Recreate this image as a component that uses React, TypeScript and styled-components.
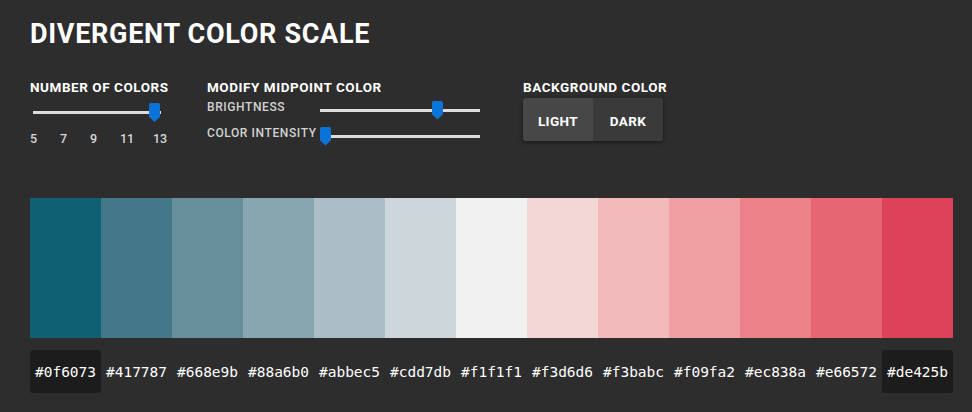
import React from "react";
import styled, { createGlobalStyle } from "styled-components";

const Global = createGlobalStyle`
  html, body { margin: 0; padding: 0; background: #2d2d2d; }
  body { font-family: "Roboto", "DejaVu Sans", sans-serif; color: #fff; }
`;

const colors = [
  "#0f6073", "#417787", "#668e9b", "#88a6b0", "#abbec5", "#cdd7db", "#f1f1f1",
  "#f3d6d6", "#f3babc", "#f09fa2", "#ec838a", "#e66572", "#de425b",
];

const Page = styled.div`
  width: 972px;
  height: 412px;
  box-sizing: border-box;
  padding: 19px 19px 0 30px;
  overflow: hidden;
`;

const Title = styled.h1`
  margin: 0;
  font-family: "Roboto", sans-serif;
  font-weight: 700;
  font-size: 27px;
  letter-spacing: 0.7px;
  line-height: 30px;
`;

const Controls = styled.div`
  display: flex;
  align-items: flex-start;
  margin-top: 30px;
  height: 119px;
`;

const Group = styled.div<{ $w: number }>`
  width: ${(p) => p.$w}px;
  display: flex;
  flex-direction: column;
`;

const GroupTitle = styled.div`
  font-weight: 700;
  font-size: 13.5px;
  letter-spacing: 0.55px;
  line-height: 16px;
  text-transform: uppercase;
  white-space: nowrap;
`;

const Track = styled.div<{ $w: number }>`
  position: relative;
  width: ${(p) => p.$w}px;
  height: 3px;
  background: #dcdcdc;
`;

const Thumb = styled.div`
  position: absolute;
  top: -8px;
  width: 11px;
  height: 19px;
  background: #0a74d8;
  border-radius: 2px 2px 0 0;
  clip-path: polygon(0 0, 100% 0, 100% 72%, 50% 100%, 0 72%);
`;

const Slider = ({ w, pos }: { w: number; pos: number }) => (
  <Track $w={w}>
    <Thumb style={{ left: pos }} />
  </Track>
);

const NumSlider = styled.div`
  margin-top: 16px;
  padding-left: 3px;
`;

const Ticks = styled.div`
  display: flex;
  margin-top: 18px;
  font-size: 12.5px;
  font-weight: 500;
  color: #d8d8d8;
  line-height: 14px;
`;

const Tick = styled.span<{ $w: number }>`
  width: ${(p) => p.$w}px;
`;

const SubRow = styled.div<{ $mt: number }>`
  display: flex;
  align-items: center;
  margin-top: ${(p) => p.$mt}px;
  height: 14px;
`;

const SubLabel = styled.div`
  width: 113px;
  font-size: 12px;
  font-weight: 500;
  color: #d2d2d2;
  letter-spacing: 0.6px;
  text-transform: uppercase;
  white-space: nowrap;
`;

const SliderSlot = styled.div`
  padding-top: 6px;
`;

const ButtonGroup = styled.div`
  display: flex;
  margin-top: 3px;
  border-radius: 3px;
  overflow: hidden;
  box-shadow: 0 1px 4px rgba(0, 0, 0, 0.5);
  width: 140px;
`;

const ToggleButton = styled.div<{ $active?: boolean }>`
  width: 70px;
  height: 43px;
  display: flex;
  align-items: center;
  justify-content: center;
  padding-top: 3px;
  box-sizing: border-box;
  background: ${(p) => (p.$active ? "#474747" : "#3a3a3a")};
  font-weight: 700;
  font-size: 13.5px;
  letter-spacing: 0.4px;
`;

const Swatches = styled.div`
  display: grid;
  grid-template-columns: repeat(13, 71px);
`;

const Swatch = styled.div<{ $c: string }>`
  height: 140px;
  background: ${(p) => p.$c};
`;

const Labels = styled.div`
  display: grid;
  grid-template-columns: repeat(13, 71px);
  margin-top: 12px;
`;

const Label = styled.div<{ $box?: boolean }>`
  height: 43px;
  display: flex;
  align-items: center;
  justify-content: center;
  border-radius: 3px;
  background: ${(p) => (p.$box ? "#1c1c1c" : "transparent")};
  font-family: "DejaVu Sans Mono", "Liberation Mono", monospace;
  font-size: 14.5px;
  color: #fff;
`;

export default function App() {
  return (
    <>
      <Global />
      <Page>
        <Title>DIVERGENT COLOR SCALE</Title>
        <Controls>
          <Group $w={177}>
            <GroupTitle>Number of colors</GroupTitle>
            <NumSlider>
              <Slider w={128} pos={116} />
            </NumSlider>
            <Ticks>
              <Tick $w={30}>5</Tick>
              <Tick $w={30}>7</Tick>
              <Tick $w={30}>9</Tick>
              <Tick $w={33}>11</Tick>
              <Tick $w={20}>13</Tick>
            </Ticks>
          </Group>
          <Group $w={316}>
            <GroupTitle>Modify midpoint color</GroupTitle>
            <SubRow $mt={5}>
              <SubLabel>Brightness</SubLabel>
              <SliderSlot>
                <Slider w={160} pos={112} />
              </SliderSlot>
            </SubRow>
            <SubRow $mt={12}>
              <SubLabel>Color intensity</SubLabel>
              <SliderSlot>
                <Slider w={160} pos={0} />
              </SliderSlot>
            </SubRow>
          </Group>
          <Group $w={160}>
            <GroupTitle>Background color</GroupTitle>
            <ButtonGroup>
              <ToggleButton $active>LIGHT</ToggleButton>
              <ToggleButton>DARK</ToggleButton>
            </ButtonGroup>
          </Group>
        </Controls>
        <Swatches>
          {colors.map((c) => (
            <Swatch key={c} $c={c} />
          ))}
        </Swatches>
        <Labels>
          {colors.map((c, i) => (
            <Label key={c} $box={i === 0 || i === colors.length - 1}>
              {c}
            </Label>
          ))}
        </Labels>
      </Page>
    </>
  );
}
